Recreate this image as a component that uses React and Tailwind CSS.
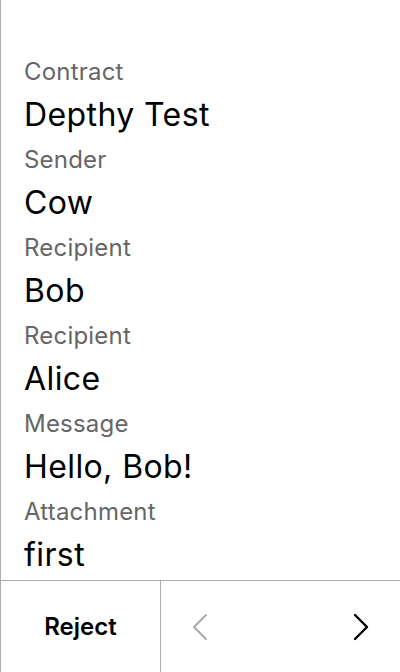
import React from "react";

const rows = [
  ["Contract", "Depthy Test"],
  ["Sender", "Cow"],
  ["Recipient", "Bob"],
  ["Recipient", "Alice"],
  ["Message", "Hello, Bob!"],
  ["Attachment", "first"],
];

export default function App() {
  return (
    <div
      className="w-[400px] h-[672px] bg-white border-l border-[#aaaaaa] flex flex-col overflow-hidden"
      style={{ fontFamily: "Inter, 'Noto Sans', sans-serif" }}
    >
      <div className="flex-1 min-h-0 flex flex-col gap-[3px] pt-[54px] pl-[23px]">
        {rows.map(([label, value], i) => (
          <div key={i} className="flex flex-col">
            <div className="h-[36px] leading-[36px] text-[24px] tracking-[0.2px] text-[#666666]">{label}</div>
            <div className="mt-[1px] h-[48px] leading-[48px] text-[32px] tracking-[0.4px] text-black">{value}</div>
          </div>
        ))}
      </div>
      <div className="h-[92px] shrink-0 border-t border-[#aaaaaa] flex">
        <div className="w-[160px] border-r border-[#aaaaaa] flex items-center justify-center">
          <span className="text-[24px] font-semibold text-black">Reject</span>
        </div>
        <div className="flex-1 flex items-center justify-between px-[31px]">
          <svg width="16" height="28" viewBox="0 0 16 28" fill="none">
            <polyline points="14,2 2,14 14,26" stroke="#aaaaaa" strokeWidth="2" strokeLinecap="round" strokeLinejoin="round" />
          </svg>
          <svg width="16" height="28" viewBox="0 0 16 28" fill="none">
            <polyline points="2,2 14,14 2,26" stroke="#000000" strokeWidth="2.4" strokeLinecap="round" strokeLinejoin="round" />
          </svg>
        </div>
      </div>
    </div>
  );
}
